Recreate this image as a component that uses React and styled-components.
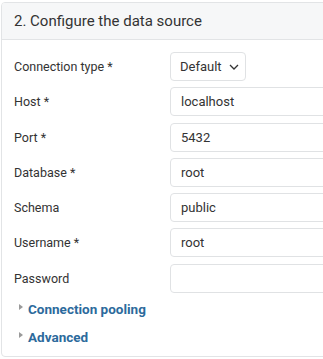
import React from 'react';
import styled, {createGlobalStyle} from 'styled-components';

const GlobalStyle = createGlobalStyle`
html, body {
  margin: 0;
  padding: 0;
  background: #ffffff;
  overflow: hidden;
}
body {
  font-family: Roboto, "Noto Sans", sans-serif;
  color: #333;
}
`

const fields = [
    {label: 'Host', required: true, value: 'localhost'},
    {label: 'Port', required: true, value: '5432'},
    {label: 'Database', required: true, value: 'root'},
    {label: 'Schema', value: 'public'},
    {label: 'Username', required: true, value: 'root'},
    {label: 'Password', value: ''},
];

function App() {
    return (
        <>
            <GlobalStyle />
            <Page>
                <Card>
                    <Header>2. Configure the data source</Header>
                    <Body>
                        <Row>
                            <Label>Connection type *</Label>
                            <Select>
                                Default
                                <svg width="10" height="6" viewBox="0 0 10 6">
                                    <path d="M1 1l4 4 4-4" fill="none" stroke="#333" strokeWidth="1.3" />
                                </svg>
                            </Select>
                        </Row>
                        {fields.map(f => (
                            <Row key={f.label}>
                                <Label>{f.label}{f.required ? ' *' : ''}</Label>
                                <Input>{f.value}</Input>
                            </Row>
                        ))}
                    </Body>
                    <Sections>
                        <Toggle><Arrow />Connection pooling</Toggle>
                        <Toggle><Arrow />Advanced</Toggle>
                    </Sections>
                </Card>
            </Page>
        </>
    )
}

const Page = styled.div`
padding: 2px 0 0 1px;
width: 400px;
`

const Card = styled.div`
width: 380px;
border: 1px solid #e2e4e6;
border-radius: 4px;
overflow: hidden;
`

const Header = styled.div`
background: #f6f7f8;
border-bottom: 1px solid #e2e4e6;
height: 36px;
line-height: 37px;
padding-left: 12px;
font-size: 15px;
color: #333;
`

const Body = styled.div`
padding: 12px 0 0 12px;
display: flex;
flex-direction: column;
gap: 6.3px;
`

const Row = styled.div`
display: flex;
align-items: center;
height: 29px;
`

const Label = styled.div`
width: 156px;
font-size: 12.5px;
color: #333;
`

const Select = styled.div`
box-sizing: border-box;
height: 29px;
width: 76px;
border: 1px solid #e0e2e4;
border-radius: 4px;
display: flex;
align-items: center;
gap: 7px;
padding-left: 9px;
font-size: 13px;
`

const Input = styled.div`
box-sizing: border-box;
height: 29px;
flex: 1;
margin-right: 20px;
border: 1px solid #e0e2e4;
border-radius: 4px;
display: flex;
align-items: center;
padding-left: 10px;
font-size: 13px;
`

const Sections = styled.div`
display: flex;
flex-direction: column;
padding: 2px 0 5px 17px;
`

const Toggle = styled.div`
height: 28px;
display: flex;
align-items: center;
gap: 5px;
font-size: 13.5px;
font-weight: bold;
color: #2c6a9c;
`

const Arrow = styled.span`
width: 0;
height: 0;
border-top: 3.5px solid transparent;
border-bottom: 3.5px solid transparent;
border-left: 4px solid #9a9a9a;
margin-top: -4px;
`

export default App
